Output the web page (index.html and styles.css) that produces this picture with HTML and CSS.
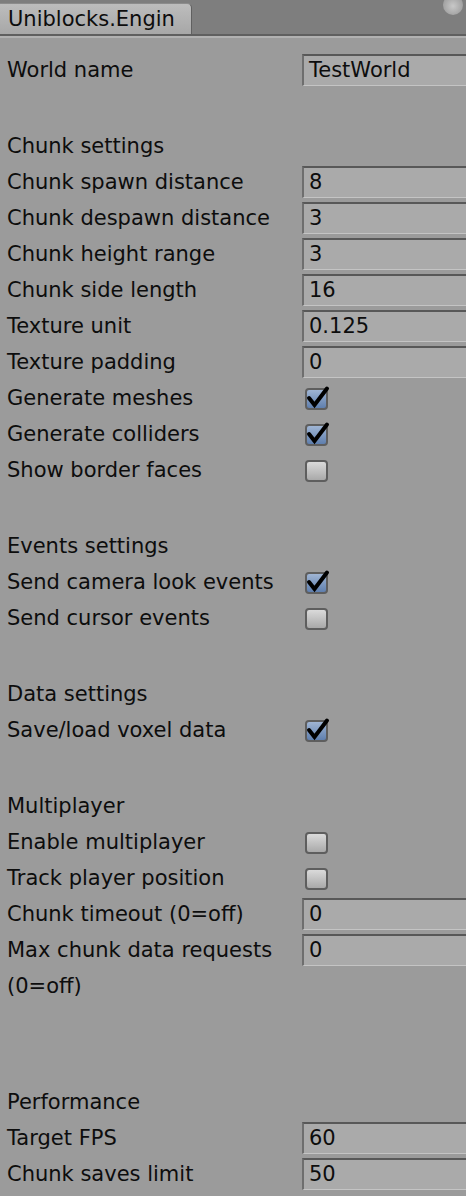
FILE: index.html
```html
<!DOCTYPE html>
<html>
<head>
<meta charset="utf-8">
<link rel="stylesheet" href="styles.css">
</head>
<body>
<div class="tabbar">
  <div class="tab">Uniblocks.Engin</div>
  <div class="knob"></div>
</div>
<div class="sep"></div>
<div class="content">
  <div class="row"><div class="label">World name</div><div class="field">TestWorld</div></div>

  <div class="header">Chunk settings</div>
  <div class="row"><div class="label">Chunk spawn distance</div><div class="field">8</div></div>
  <div class="row"><div class="label">Chunk despawn distance</div><div class="field">3</div></div>
  <div class="row"><div class="label">Chunk height range</div><div class="field">3</div></div>
  <div class="row"><div class="label">Chunk side length</div><div class="field">16</div></div>
  <div class="row"><div class="label">Texture unit</div><div class="field">0.125</div></div>
  <div class="row"><div class="label">Texture padding</div><div class="field">0</div></div>
  <div class="row"><div class="label">Generate meshes</div><div class="check on"><svg viewBox="0 0 23 22" width="23" height="22"><path d="M4 10 L9.5 17 L22 0.5"/></svg></div></div>
  <div class="row"><div class="label">Generate colliders</div><div class="check on"><svg viewBox="0 0 23 22" width="23" height="22"><path d="M4 10 L9.5 17 L22 0.5"/></svg></div></div>
  <div class="row"><div class="label">Show border faces</div><div class="check"></div></div>

  <div class="header">Events settings</div>
  <div class="row"><div class="label">Send camera look events</div><div class="check on"><svg viewBox="0 0 23 22" width="23" height="22"><path d="M4 10 L9.5 17 L22 0.5"/></svg></div></div>
  <div class="row"><div class="label">Send cursor events</div><div class="check"></div></div>

  <div class="header">Data settings</div>
  <div class="row"><div class="label">Save/load voxel data</div><div class="check on"><svg viewBox="0 0 23 22" width="23" height="22"><path d="M4 10 L9.5 17 L22 0.5"/></svg></div></div>

  <div class="header">Multiplayer</div>
  <div class="row"><div class="label">Enable multiplayer</div><div class="check"></div></div>
  <div class="row"><div class="label">Track player position</div><div class="check"></div></div>
  <div class="row"><div class="label">Chunk timeout (0=off)</div><div class="field">0</div></div>
  <div class="row"><div class="label">Max chunk data requests (0=off)</div><div class="field">0</div></div>

  <div class="header big">Performance</div>
  <div class="row"><div class="label">Target FPS</div><div class="field">60</div></div>
  <div class="row"><div class="label">Chunk saves limit</div><div class="field">50</div></div>
</div>
</body>
</html>
```
FILE: styles.css
```css
html, body {
  margin: 0;
  padding: 0;
}
body {
  width: 466px;
  height: 1196px;
  overflow: hidden;
  background: #9b9b9b;
  font-family: "DejaVu Sans", "Liberation Sans", sans-serif;
  font-size: 21px;
  color: #0d0d0d;
}
.tabbar {
  position: relative;
  height: 34px;
  background: #7e7e7e;
  border-bottom: 2px solid #5f5f5f;
  display: flex;
  align-items: flex-end;
}
.tab {
  box-sizing: border-box;
  width: 192px;
  height: 31px;
  padding-left: 8px;
  line-height: 31px;
  background: linear-gradient(#bdbdbd, #a7a7a7);
  border-top: 1px solid #8c8c8c;
  border-right: 1px solid #606060;
  border-top-right-radius: 5px;
}
.knob {
  position: absolute;
  right: 3px;
  top: -5px;
  width: 20px;
  height: 20px;
  border-radius: 50%;
  background: radial-gradient(circle at 50% 55%, #c8c8c8, #a0a0a0 70%, #8a8a8a);
}
.sep {
  height: 2px;
  background: #b1b1b1;
}
.content {
  padding: 14px 0 0 7px;
}
.row {
  display: flex;
  align-items: flex-start;
  min-height: 36px;
}
.label {
  flex: none;
  width: 295px;
  line-height: 36px;
}
.header {
  line-height: 36px;
  margin-top: 40px;
}
.header.big {
  margin-top: 80px;
}
.field {
  flex: none;
  box-sizing: border-box;
  width: 180px;
  height: 32px;
  margin-top: 2px;
  padding-left: 5px;
  line-height: 29px;
  background: #aaaaaa;
  border-top: 2px solid #585858;
  border-left: 2px solid #6e6e6e;
  border-bottom: 1px solid #c4c4c4;
}
.check {
  flex: none;
  box-sizing: border-box;
  width: 23px;
  height: 22px;
  margin: 8px 0 0 3px;
  border: 2px solid #5e5e5e;
  border-radius: 4px;
  background: linear-gradient(#dadada, #a9a9a9);
  position: relative;
}
.check.on {
  background: linear-gradient(#9fb5d4, #5f7fae);
}
.check svg {
  position: absolute;
  left: -2px;
  top: -2px;
  overflow: visible;
}
.check path {
  fill: none;
  stroke: #000;
  stroke-width: 4;
  stroke-linecap: round;
  stroke-linejoin: miter;
}
```
